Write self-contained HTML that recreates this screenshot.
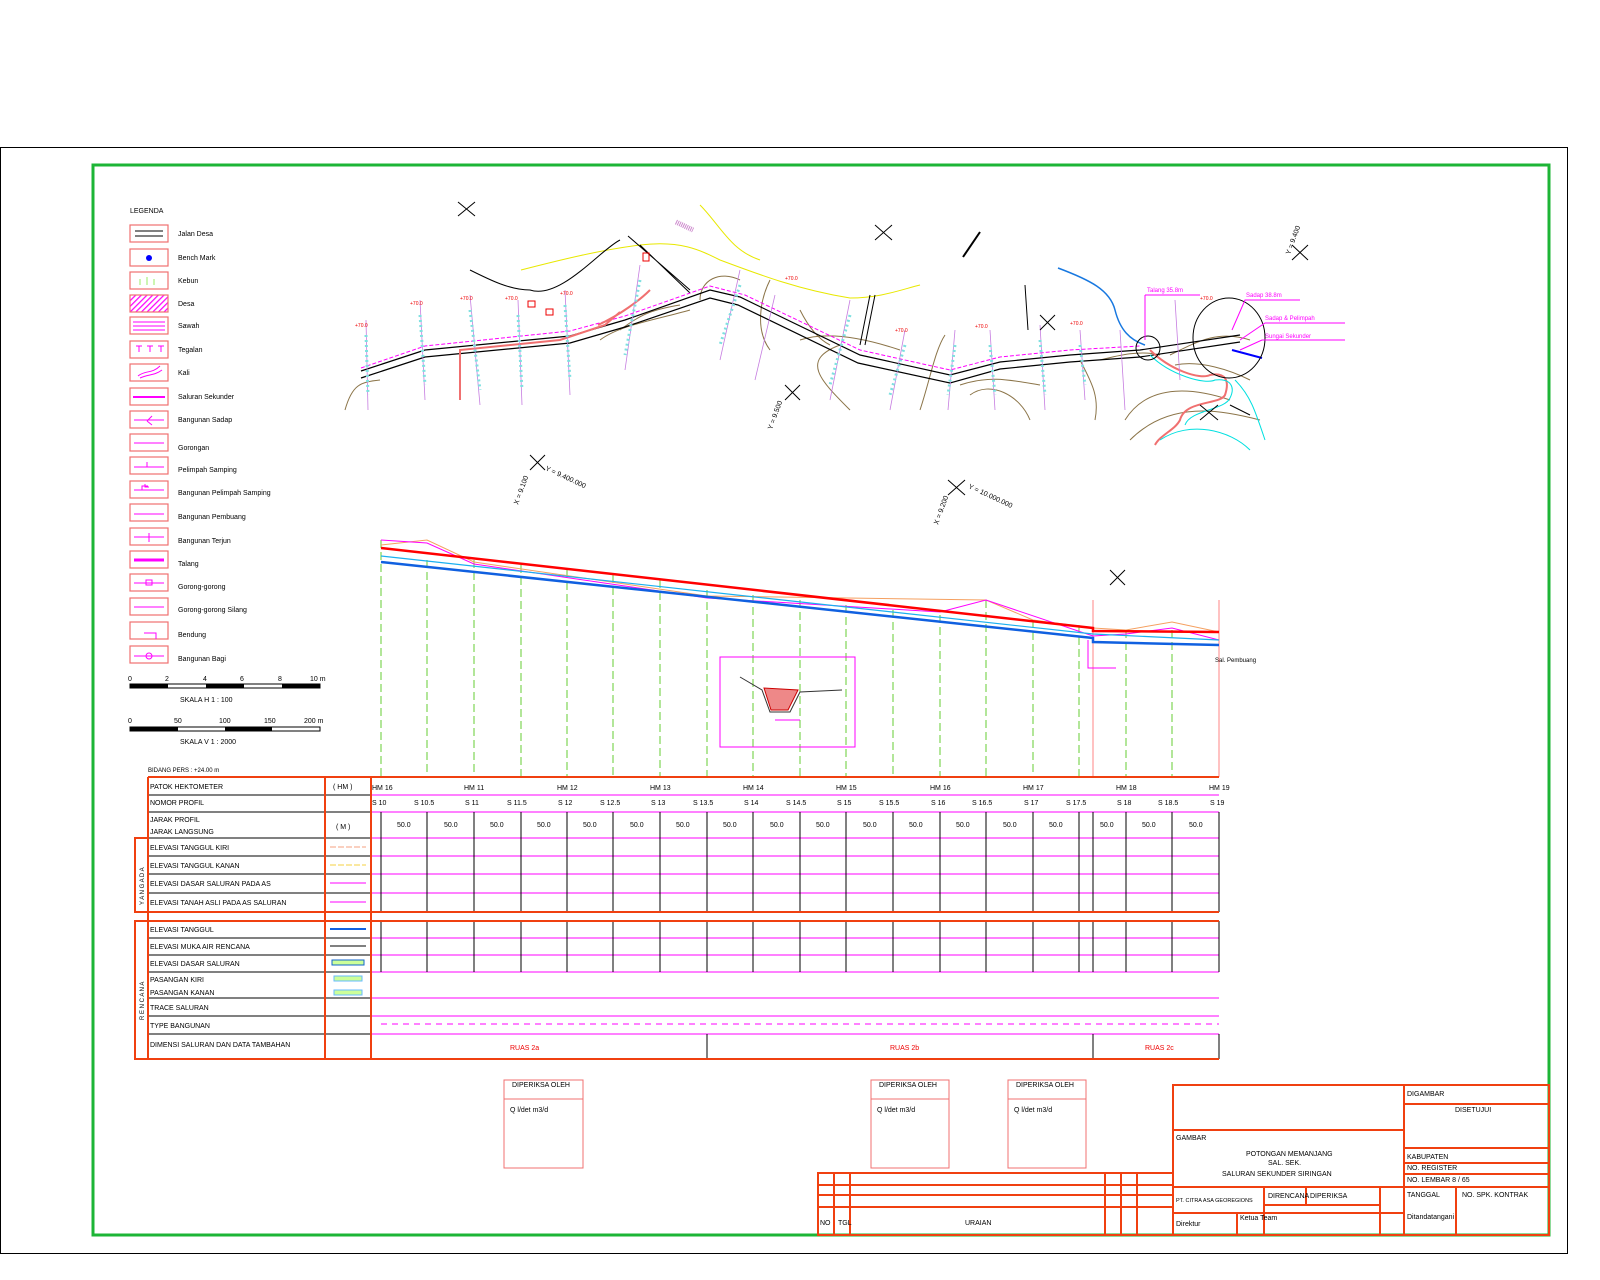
<!DOCTYPE html>
<html><head><meta charset="utf-8"><style>
html,body{margin:0;padding:0;background:#fff;width:1600px;height:1280px;overflow:hidden}
svg{display:block}
text{font-family:"Liberation Sans",sans-serif;font-size:7px;fill:#000}
</style></head><body>
<svg width="1600" height="1280" viewBox="0 0 1600 1280" xmlns="http://www.w3.org/2000/svg">
<defs><pattern id="h" width="4" height="4" patternUnits="userSpaceOnUse" patternTransform="rotate(45)"><rect width="4" height="4" fill="#fff"/><line x1="0" y1="0" x2="0" y2="4" stroke="#f0f" stroke-width="2.5"/></pattern></defs>
<rect x="0.5" y="147.5" width="1567" height="1106" fill="none" stroke="#000" stroke-width="1"/>
<rect x="93" y="165" width="1456" height="1070" fill="none" stroke="#1db536" stroke-width="3"/>

<!-- LEGEND -->
<text x="130" y="213" font-size="10">LEGENDA</text>
<g fill="none" stroke="#f07070" stroke-width="1.2">
<rect x="130" y="225" width="38" height="17"/><rect x="130" y="249" width="38" height="17"/>
<rect x="130" y="272" width="38" height="17"/><rect x="130" y="295" width="38" height="17" fill="url(#h)"/>
<rect x="130" y="317" width="38" height="17"/><rect x="130" y="341" width="38" height="17"/>
<rect x="130" y="364" width="38" height="17"/><rect x="130" y="388" width="38" height="17"/>
<rect x="130" y="411" width="38" height="17"/><rect x="130" y="434" width="38" height="17"/>
<rect x="130" y="457" width="38" height="17"/><rect x="130" y="481" width="38" height="17"/>
<rect x="130" y="504" width="38" height="17"/><rect x="130" y="528" width="38" height="17"/>
<rect x="130" y="551" width="38" height="17"/><rect x="130" y="574" width="38" height="17"/>
<rect x="130" y="598" width="38" height="17"/><rect x="130" y="622" width="38" height="17"/>
<rect x="130" y="646" width="38" height="17"/>
</g>
<g stroke="#000"><line x1="135" y1="231" x2="163" y2="231"/><line x1="135" y1="236" x2="163" y2="236"/></g>
<circle cx="149" cy="258" r="3" fill="#00f"/>
<g stroke="#f0f" stroke-width="1" fill="none"><line x1="133" y1="322" x2="165" y2="322"/><line x1="133" y1="326" x2="165" y2="326"/><line x1="133" y1="330" x2="165" y2="330"/>
<path d="M136 346h6M139 346v6M147 346h6M150 346v6M158 346h6M161 346v6"/>
<path d="M138 376 C145 370 152 374 160 366 M140 378 C148 374 154 376 162 370"/>
<line x1="133" y1="397" x2="165" y2="397" stroke-width="2"/>
<line x1="134" y1="420" x2="164" y2="420"/><line x1="134" y1="443" x2="164" y2="443"/><line x1="134" y1="467" x2="164" y2="467"/>
<line x1="134" y1="490" x2="164" y2="490"/><line x1="134" y1="514" x2="164" y2="514"/><line x1="134" y1="537" x2="164" y2="537"/>
<line x1="134" y1="560" x2="164" y2="560" stroke-width="3"/><line x1="134" y1="583" x2="164" y2="583"/><line x1="134" y1="607" x2="164" y2="607"/>
<line x1="134" y1="656" x2="164" y2="656"/><line x1="149" y1="533" x2="149" y2="542"/>
<rect x="146" y="580" width="6" height="5"/><circle cx="149" cy="656" r="3"/><path d="M147 421l5-5M147 421l5 4M147 467v-5M142 490v-4h6M149 487h-4v-3M148 633h8v6M144 633h8"/></g>
<g fill="none" stroke="#9e6" ><path d="M140 285v-6M147 285v-8M154 285v-6"/></g>
<text x="178" y="236">Jalan Desa</text><text x="178" y="260">Bench Mark</text><text x="178" y="283">Kebun</text>
<text x="178" y="306">Desa</text><text x="178" y="328">Sawah</text><text x="178" y="352">Tegalan</text>
<text x="178" y="375">Kali</text><text x="178" y="399">Saluran Sekunder</text><text x="178" y="422">Bangunan Sadap</text>
<text x="178" y="450">Gorongan</text><text x="178" y="472">Pelimpah Samping</text><text x="178" y="495">Bangunan Pelimpah Samping</text>
<text x="178" y="519">Bangunan Pembuang</text><text x="178" y="543">Bangunan Terjun</text><text x="178" y="566">Talang</text>
<text x="178" y="589">Gorong-gorong</text><text x="178" y="612">Gorong-gorong Silang</text><text x="178" y="637">Bendung</text>
<text x="178" y="661">Bangunan Bagi</text>
<rect x="130" y="684" width="190" height="4" fill="none" stroke="#000"/>
<rect x="130" y="684" width="38" height="4" fill="#000"/><rect x="206" y="684" width="38" height="4" fill="#000"/><rect x="282" y="684" width="38" height="4" fill="#000"/>
<text x="128" y="681">0</text><text x="165" y="681">2</text><text x="203" y="681">4</text><text x="240" y="681">6</text><text x="278" y="681">8</text><text x="310" y="681">10 m</text>
<text x="180" y="702">SKALA H 1 : 100</text>
<rect x="130" y="727" width="190" height="4" fill="none" stroke="#000"/>
<rect x="130" y="727" width="48" height="4" fill="#000"/><rect x="225" y="727" width="47" height="4" fill="#000"/>
<text x="128" y="723">0</text><text x="174" y="723">50</text><text x="219" y="723">100</text><text x="264" y="723">150</text><text x="304" y="723">200 m</text>
<text x="180" y="744">SKALA V 1 : 2000</text>

<!-- PLAN VIEW -->
<g fill="none" stroke-width="1">
<path d="M345 410 C352 385 360 382 380 380 M850 410 C820 380 800 360 840 345 M920 410 C930 380 935 350 945 335 M970 395 C990 380 1020 395 1030 420 M1080 360 C1090 380 1100 395 1095 420 M770 280 C760 300 755 330 770 350 M700 300 C700 280 720 270 740 280 M1125 420 C1150 380 1200 390 1230 400 M1130 440 C1170 400 1220 410 1260 420 M1170 355 C1200 340 1220 330 1250 340 M1175 365 C1200 360 1230 370 1250 380 M620 330 C640 315 650 310 680 305 M600 340 C620 325 655 320 690 310 M800 340 C830 330 870 340 900 350 M800 310 C810 330 820 340 830 345 M960 385 C990 375 1010 380 1040 385 M1100 360 C1120 355 1140 350 1160 355" stroke="#8b7448"/>
<path d="M521 270 C560 260 600 250 640 245 C680 240 700 250 720 260 C760 275 800 290 850 298 C880 298 900 290 920 285 M700 205 C720 225 730 250 760 260" stroke="#e8e800"/>
<path d="M470 270 C490 280 510 290 530 290 C560 300 600 250 620 240 M628 236 L690 290 M640 245 L690 293" stroke="#000"/>
<path d="M361 371 L425 350 L570 336 L625 320 L710 290 L740 297 L860 355 L950 375 L1000 362 L1070 355 L1140 350 L1240 335" stroke="#000" stroke-width="1.2"/>
<path d="M361 378 L425 357 L570 343 L625 327 L710 298 L738 305 L858 363 L950 383 L1000 369 L1070 362 L1140 357 L1240 342" stroke="#000" stroke-width="1.2"/>
<path d="M361 368 L425 346 L570 331 L625 316 L710 286 L745 295 L860 350 L950 370 L1000 357 L1070 350 L1140 346" stroke="#f0f" stroke-width="1" stroke-dasharray="4,2"/>
<path d="M460 400 L460 350 L560 340 L605 325 L620 312 M598 325 C620 315 640 300 650 290" stroke="#f07070" stroke-width="2"/>
<path d="M1150 350 C1170 370 1200 380 1210 375 C1225 372 1230 380 1225 395 C1220 405 1185 400 1180 420 C1175 430 1160 435 1155 445" stroke="#f07070" stroke-width="2"/>
<path d="M1150 355 C1170 375 1205 385 1215 380 C1232 378 1235 388 1230 398 C1225 410 1190 410 1185 425 M1235 380 C1250 395 1255 410 1265 440 M1160 440 C1190 420 1230 430 1250 450" stroke="#00e0e0"/>
<path d="M1058 268 C1090 280 1110 290 1115 310 C1120 330 1130 340 1145 345" stroke="#1878e0" stroke-width="1.5"/>
<path d="M1232 350 L1262 358" stroke="#00f" stroke-width="2"/>
<circle cx="1148" cy="348" r="12" stroke="#000"/><ellipse cx="1229" cy="338" rx="36" ry="40" stroke="#000"/>
<path d="M1145 295 L1145 340 M1145 295 L1200 295 M1232 330 L1245 300 L1300 300 M1240 340 L1265 323 L1345 323 M1240 350 L1262 340 L1345 340" stroke="#f0f"/>
<path d="M366 320 L368 410 M420 300 L425 400 M470 295 L480 405 M518 300 L522 405 M565 290 L570 395 M640 265 L625 370 M740 270 L720 360 M775 295 L755 380 M850 300 L830 400 M905 330 L890 410 M955 330 L948 410 M990 330 L995 410 M1040 325 L1045 410 M1080 330 L1085 400 M1120 330 L1125 410 M1175 300 L1180 380" stroke="#c67de0" stroke-width="0.8"/>
<path d="M366 335 L368 395 M420 315 L425 385 M470 310 L480 390 M518 315 L522 390 M565 305 L570 380 M640 280 L625 355 M740 285 L720 345 M850 315 L830 385 M905 345 L890 395 M955 345 L948 395 M990 345 L995 395 M1040 340 L1045 395 M1080 345 L1085 385" stroke="#7ee0e0" stroke-width="3" stroke-dasharray="2,3"/>
<path d="M458 202 L475 216 M475 202 L458 216 M875 225 L892 240 M892 225 L875 240 M1040 315 L1055 330 M1055 315 L1040 330 M1200 405 L1218 420 M1218 405 L1200 420 M530 455 L545 470 M545 455 L530 470 M948 480 L965 495 M965 480 L948 495 M785 385 L800 400 M800 385 L785 400 M1292 245 L1308 260 M1308 245 L1292 260 M1110 570 L1125 585 M1125 570 L1110 585 M1025 285 L1028 330 M870 295 L860 345 M875 295 L865 345 M1230 405 L1250 415" stroke="#000"/>
<path d="M963 257 L980 232" stroke="#000" stroke-width="2"/>
<path d="M676 222 L693 230" stroke="#c8c" stroke-width="5" stroke-dasharray="1,1"/>
<rect x="643" y="253" width="6" height="8" stroke="#e00"/><rect x="528" y="301" width="7" height="6" stroke="#e00"/><rect x="546" y="309" width="7" height="6" stroke="#e00"/>
</g>
<g><text x="355" y="327" style="fill:#e00;font-size:5px">+70.0</text><text x="410" y="305" style="fill:#e00;font-size:5px">+70.0</text><text x="460" y="300" style="fill:#e00;font-size:5px">+70.0</text><text x="505" y="300" style="fill:#e00;font-size:5px">+70.0</text><text x="560" y="295" style="fill:#e00;font-size:5px">+70.0</text><text x="785" y="280" style="fill:#e00;font-size:5px">+70.0</text><text x="895" y="332" style="fill:#e00;font-size:5px">+70.0</text><text x="975" y="328" style="fill:#e00;font-size:5px">+70.0</text><text x="1070" y="325" style="fill:#e00;font-size:5px">+70.0</text><text x="1200" y="300" style="fill:#e00;font-size:5px">+70.0</text></g>
<text x="1147" y="292" style="fill:#f0f;font-size:6px">Talang 35.8m</text><text x="1246" y="297" style="fill:#f0f;font-size:6px">Sadap 38.8m</text><text x="1265" y="320" style="fill:#f0f;font-size:6px">Sadap &amp; Pelimpah</text><text x="1265" y="338" style="fill:#f0f;font-size:6px">Sungai Sekunder</text>
<text x="1215" y="662" style="font-size:6px">Sal. Pembuang</text>
<g style="font-size:6px"><text transform="translate(772,430) rotate(-70)">Y = 9.500</text><text transform="translate(518,505) rotate(-70)">X = 9.100</text><text transform="translate(545,470) rotate(25)">Y = 9.400.000</text><text transform="translate(938,525) rotate(-70)">X = 9.200</text><text transform="translate(968,488) rotate(25)">Y = 10.000.000</text><text transform="translate(1290,255) rotate(-70)">Y = 9.400</text></g>

<!-- PROFILE -->
<g stroke="#6c3" stroke-width="1" stroke-dasharray="8,4">
<path d="M381 540V777M427 560V777M474 560V777M521 565V777M567 570V777M613 575V777M660 580V777M707 590V777M753 595V777M800 600V777M846 605V777M893 610V777M940 615V777M986 600V777M1033 620V777M1079 625V777M1126 630V777M1172 630V777"/>
</g>
<path d="M1093 600V777M1219 600V777" stroke="#f66" stroke-width="0.8"/>
<path d="M381 545 L427 540 L474 562 L707 596 L986 600 L1033 620 L1093 628 L1126 630 L1172 622 L1219 632" fill="none" stroke="#f5a060"/>
<path d="M381 540 L427 543 L474 564 L707 598 L940 612 L986 600 L1093 636 L1126 634 L1172 628 L1219 640" fill="none" stroke="#f0f"/>
<path d="M381 548 L1093 628 L1093 631 L1219 632" fill="none" stroke="#f00" stroke-width="2.5"/>
<path d="M381 556 L1093 634 L1219 640" fill="none" stroke="#1ab0f0" stroke-width="1.2"/>
<path d="M381 562 L1093 638 L1093 642 L1219 645" fill="none" stroke="#1060e0" stroke-width="2.5"/>
<path d="M1088 640V668H1116" fill="none" stroke="#f0f"/>
<rect x="720" y="657" width="135" height="90" fill="none" stroke="#f0f"/>
<path d="M740 677 L762 690 L770 712 L790 712 L800 692 L842 690" fill="none" stroke="#333"/>
<path d="M764 688 L771 710 L788 710 L798 690Z" fill="#e88" stroke="#c00"/>
<path d="M775 720 H800" stroke="#f0f"/>

<!-- TABLE -->
<text x="148" y="772" style="font-size:6px">BIDANG PERS : +24.00 m</text>
<g stroke="#f0f" stroke-width="1">
<path d="M371 795H1219M371 812H1219M371 838H1219M371 856H1219M371 874H1219M371 893H1219M371 938H1219M371 955H1219M371 972H1219M371 998H1219M371 1016H1219M371 1034H1219"/>
</g>
<path d="M381 1024H1219" stroke="#f0f" stroke-dasharray="6,5"/>
<g stroke="#000" stroke-width="1">
<path d="M148 795H371M148 812H371M148 838H371M148 856H371M148 874H371M148 893H371M148 938H371M148 955H371M148 972H371M148 998H371M148 1016H371M148 1034H371"/>
<path d="M381 812V912M427 812V912M474 812V912M521 812V912M567 812V912M613 812V912M660 812V912M707 812V912M753 812V912M800 812V912M846 812V912M893 812V912M940 812V912M986 812V912M1033 812V912M1079 812V912M1093 812V912M1126 812V912M1172 812V912M1219 812V912"/>
<path d="M381 921V972M427 921V972M474 921V972M521 921V972M567 921V972M613 921V972M660 921V972M707 921V972M753 921V972M800 921V972M846 921V972M893 921V972M940 921V972M986 921V972M1033 921V972M1079 921V972M1093 921V972M1126 921V972M1172 921V972M1219 921V972"/>
<path d="M707 1034V1059M1093 1034V1059M1219 1034V1059"/>
</g>
<g fill="none" stroke="#f04010" stroke-width="2">
<path d="M148 777H1219M148 912H1219M148 921H1219M148 1059H1219"/>
<path d="M148 777V1059M325 777V1059M371 777V1059"/>
<rect x="135" y="838" width="13" height="74"/><rect x="135" y="921" width="13" height="138"/>
</g>
<path d="M330 847H366" stroke="#f5a080" stroke-dasharray="6,2"/><path d="M330 865H366" stroke="#f5d040" stroke-dasharray="6,2"/>
<path d="M330 883H366M330 902H366" stroke="#f0f"/><path d="M330 929H366" stroke="#1060e0" stroke-width="2"/>
<path d="M330 946H366" stroke="#000"/><rect x="332" y="960" width="32" height="5" fill="#cf9" stroke="#16c"/>
<rect x="334" y="976" width="28" height="5" fill="#cf9" stroke="#6bf"/><rect x="334" y="990" width="28" height="5" fill="#cf9" stroke="#6bf"/>
<g style="font-size:6.5px">
<text x="150" y="789">PATOK HEKTOMETER</text><text x="333" y="789">( HM )</text>
<text x="150" y="805">NOMOR PROFIL</text>
<text x="150" y="822">JARAK PROFIL</text><text x="150" y="834">JARAK LANGSUNG</text><text x="336" y="829">( M )</text>
<text x="150" y="850">ELEVASI TANGGUL KIRI</text><text x="150" y="868">ELEVASI TANGGUL KANAN</text>
<text x="150" y="886">ELEVASI DASAR SALURAN PADA AS</text><text x="150" y="905">ELEVASI TANAH ASLI PADA AS SALURAN</text>
<text x="150" y="932">ELEVASI TANGGUL</text><text x="150" y="949">ELEVASI MUKA AIR RENCANA</text>
<text x="150" y="966">ELEVASI DASAR SALURAN</text><text x="150" y="982">PASANGAN KIRI</text><text x="150" y="995">PASANGAN KANAN</text>
<text x="150" y="1010">TRACE SALURAN</text><text x="150" y="1028">TYPE BANGUNAN</text><text x="150" y="1047">DIMENSI SALURAN DAN DATA TAMBAHAN</text>
<text transform="translate(144,905) rotate(-90)" style="font-size:6px">Y A N G   A D A</text>
<text transform="translate(144,1020) rotate(-90)" style="font-size:6px">R E N C A N A</text>
<text x="372" y="790">HM 16</text><text x="464" y="790">HM 11</text><text x="557" y="790">HM 12</text><text x="650" y="790">HM 13</text><text x="743" y="790">HM 14</text><text x="836" y="790">HM 15</text><text x="930" y="790">HM 16</text><text x="1023" y="790">HM 17</text><text x="1116" y="790">HM 18</text><text x="1209" y="790">HM 19</text>
<text x="372" y="805">S 10</text><text x="414" y="805">S 10.5</text><text x="465" y="805">S 11</text><text x="507" y="805">S 11.5</text><text x="558" y="805">S 12</text><text x="600" y="805">S 12.5</text><text x="651" y="805">S 13</text><text x="693" y="805">S 13.5</text><text x="744" y="805">S 14</text><text x="786" y="805">S 14.5</text><text x="837" y="805">S 15</text><text x="879" y="805">S 15.5</text><text x="931" y="805">S 16</text><text x="972" y="805">S 16.5</text><text x="1024" y="805">S 17</text><text x="1066" y="805">S 17.5</text><text x="1117" y="805">S 18</text><text x="1158" y="805">S 18.5</text><text x="1210" y="805">S 19</text>
<text x="397" y="827">50.0</text><text x="444" y="827">50.0</text><text x="490" y="827">50.0</text><text x="537" y="827">50.0</text><text x="583" y="827">50.0</text><text x="630" y="827">50.0</text><text x="676" y="827">50.0</text><text x="723" y="827">50.0</text><text x="770" y="827">50.0</text><text x="816" y="827">50.0</text><text x="863" y="827">50.0</text><text x="909" y="827">50.0</text><text x="956" y="827">50.0</text><text x="1003" y="827">50.0</text><text x="1049" y="827">50.0</text><text x="1100" y="827">50.0</text><text x="1142" y="827">50.0</text><text x="1189" y="827">50.0</text>
</g>
<g style="font-size:7px"><text x="510" y="1050" style="fill:#e00">RUAS 2a</text><text x="890" y="1050" style="fill:#e00">RUAS 2b</text><text x="1145" y="1050" style="fill:#e00">RUAS 2c</text></g>

<!-- STAMPS -->
<g fill="none" stroke="#f07070"><rect x="504" y="1080" width="79" height="88"/><path d="M504 1099H583"/>
<rect x="871" y="1080" width="78" height="88"/><path d="M871 1099H949"/>
<rect x="1008" y="1080" width="78" height="88"/><path d="M1008 1099H1086"/></g>
<g style="font-size:5px"><text x="512" y="1087">DIPERIKSA OLEH</text><text x="879" y="1087">DIPERIKSA OLEH</text><text x="1016" y="1087">DIPERIKSA OLEH</text>
<text x="510" y="1112">Q   l/det   m3/d</text><text x="877" y="1112">Q   l/det   m3/d</text><text x="1014" y="1112">Q   l/det   m3/d</text></g>

<!-- TITLE BLOCK -->
<g fill="none" stroke="#f04010" stroke-width="2">
<rect x="1173" y="1085" width="376" height="150"/>
<path d="M1173 1130H1404M1173 1187H1549M1404 1085V1235M1404 1104H1549M1404 1148H1549M1404 1163H1549M1404 1174H1549M1456 1187V1235M1264 1187V1235M1306 1187V1205M1380 1187V1235M1264 1205H1380M1237 1213V1235M1173 1213H1404"/>
<rect x="818" y="1173" width="355" height="62"/>
<path d="M818 1185H1173M818 1195H1173M818 1207H1173M834 1173V1235M850 1173V1235M1105 1173V1235M1121 1173V1235M1137 1173V1235"/>
</g>
<g style="font-size:6.5px">
<text x="1176" y="1140">GAMBAR</text><text x="1246" y="1156">POTONGAN MEMANJANG</text><text x="1268" y="1165">SAL. SEK.</text><text x="1222" y="1176">SALURAN SEKUNDER SIRINGAN</text>
<text x="1407" y="1096">DIGAMBAR</text><text x="1455" y="1112">DISETUJUI</text><text x="1407" y="1159">KABUPATEN</text><text x="1407" y="1170">NO. REGISTER</text><text x="1407" y="1182">NO. LEMBAR    8 / 65</text>
<text x="1407" y="1197">TANGGAL</text><text x="1462" y="1197">NO. SPK. KONTRAK</text><text x="1407" y="1219">Ditandatangani</text>
<text x="1176" y="1202" style="font-size:5.5px">PT. CITRA ASA GEOREGIONS</text><text x="1268" y="1198">DIRENCANA</text><text x="1310" y="1198">DIPERIKSA</text>
<text x="1176" y="1226">Direktur</text><text x="1240" y="1220">Ketua Team</text><text x="820" y="1225">NO</text><text x="838" y="1225">TGL</text><text x="965" y="1225">URAIAN</text>
</g>
</svg>
</body></html>
